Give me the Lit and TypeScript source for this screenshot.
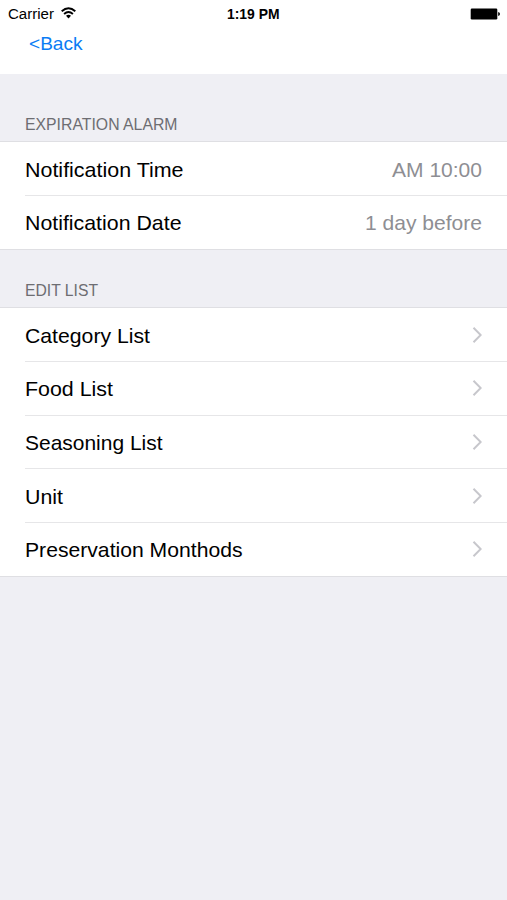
import { LitElement, html, css, svg } from "lit";
import { customElement } from "lit/decorators.js";

interface Row { label: string; width: number; value?: string; valueWidth?: number }
interface Section { title: string; titleWidth: number; rows: Row[]; cls: string }

const sections: Section[] = [
  { title: "EXPIRATION ALARM", titleWidth: 152.5, cls: "alarm", rows: [
    { label: "Notification Time", width: 158.5, value: "AM 10:00", valueWidth: 90 },
    { label: "Notification Date", width: 156.5, value: "1 day before", valueWidth: 117 },
  ] },
  { title: "EDIT LIST", titleWidth: 73, cls: "edit", rows: [
    { label: "Category List", width: 125 },
    { label: "Food List", width: 88 },
    { label: "Seasoning List", width: 137.5 },
    { label: "Unit", width: 38 },
    { label: "Preservation Monthods", width: 217.5 },
  ] },
];

const fit = (text: string, width: number, size: number, cls: string, baseline = 22) => html`
  <svg class="fit ${cls}" width=${width} height="30" viewBox="0 0 ${width} 30">
    ${svg`<text x="0" y=${baseline} font-size=${size} textLength=${width} lengthAdjust="spacingAndGlyphs">${text}</text>`}
  </svg>`;

@customElement("app-root")
export class AppRoot extends LitElement {
  static styles = css`
    :host { display: flex; flex-direction: column; height: 900px; background: #efeff4; font-family: "Liberation Sans", sans-serif; color: #000; overflow: hidden; }
    .top { height: 74px; background: #fff; flex: none; }
    .status { height: 28px; display: grid; grid-template-columns: 1fr auto 1fr; align-items: center; padding: 0 7px 0 8px; }
    .carrier { display: flex; align-items: center; gap: 7px; }
    .carrier svg:last-child { margin-top: -2px; }
    .battery { justify-self: end; margin-top: -1px; }
    svg { display: block; flex: none; }
    .fit { overflow: visible; font-family: "Liberation Sans", sans-serif; }
    .small { margin: -8px 0 -4px; }
    .bold { font-weight: bold; margin-left: -1px; }
    .back { margin: 0 0 0 29px; fill: #0a7cf5; }
    .head { display: flex; align-items: flex-end; fill: #6d6d72; padding: 0 0 3px 25px; box-sizing: border-box; border-bottom: 1px solid #dfdfe3; }
    .alarm .head { height: 68.4px; }
    .edit .head { height: 58.8px; }
    .rows { background: #fff; }
    .row { margin-left: 25px; padding-right: 24.6px; height: 53.65px; box-sizing: border-box; display: flex; align-items: center; justify-content: space-between; border-bottom: 1px solid #e6e6e8; }
    .row:last-child { margin-left: 0; padding-left: 25px; border-color: #dfdfe3; }
    .value { fill: #8e8e93; }
  `;

  render() {
    return html`
      <header class="top">
        <div class="status">
          <div class="carrier">
            ${fit("Carrier", 46, 14, "small")}
            <svg width="15" height="12" viewBox="0 0 15 12" fill="none" stroke="#000" stroke-width="1.9">
              <path d="M.7 4.2Q7.5-1.8 14.3 4.2M3.1 7Q7.5 3.1 11.9 7"></path><path d="M5 8.8Q7.5 6.7 10 8.8L7.5 11.4Z" fill="#000" stroke="none"></path>
            </svg>
          </div>
          ${fit("1:19 PM", 52.5, 14, "small bold")}
          <svg class="battery" width="30" height="12" viewBox="0 0 30 12"><rect x=".7" y=".6" width="26.6" height="10.8" rx="1.2"></rect><path d="M28.2 4Q30 4.5 30 6T28.2 8Z"></path></svg>
        </div>
        ${fit("<Back", 53.5, 18.5, "back", 22.3)}
      </header>
      ${sections.map(s => html`<section class=${s.cls}>
        <div class="head">${fit(s.title, s.titleWidth, 16, "")}</div>
        <div class="rows">${s.rows.map(r => html`<div class="row">
          ${fit(r.label, r.width, 21, "", 23.05)}
          ${r.value ? fit(r.value, r.valueWidth!, 21, "value", 23.05) : html`<svg width="10" height="18" viewBox="0 0 10 18" fill="none" stroke="#c7c7cc" stroke-width="2"><path d="M1.5 1.8 8.7 9 1.5 16.2"></path></svg>`}
        </div>`)}</div>
      </section>`)}
    `;
  }
}
